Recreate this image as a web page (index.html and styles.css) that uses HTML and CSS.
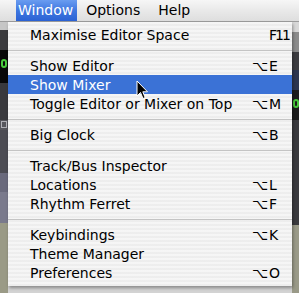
FILE: index.html
```html
<!DOCTYPE html>
<html>
<head>
<meta charset="utf-8">
<link rel="stylesheet" href="styles.css">
</head>
<body>
<div class="screen">
  <div class="menubar">
    <span class="mb-item active">Window</span>
    <span class="mb-item">Options</span>
    <span class="mb-item">Help</span>
  </div>
  <div class="desk">
    <div class="strip left">
      <div class="s s1"></div>
      <div class="s s2"></div>
      <div class="s s3"><i class="digit"></i></div>
      <div class="s s4"></div>
      <div class="s s5"><i class="tick"></i></div>
      <div class="s s6"></div>
      <div class="s s7"></div>
      <div class="s s8"></div>
      <div class="s s9"></div>
    </div>
    <div class="center"></div>
    <div class="strip right">
      <div class="s r1"></div>
      <div class="s r2"></div>
      <div class="s r3"></div>
      <div class="s r4"></div>
      <div class="s r5"><i class="digit"></i></div>
      <div class="s r6"></div>
      <div class="s r7"></div>
    </div>
  </div>

  <div class="menu">
    <div class="item"><span class="label">Maximise Editor Space</span><span class="mod"></span><span class="key fkey">F11</span></div>
    <div class="sep"></div>
    <div class="item"><span class="label">Show Editor</span><span class="mod">⌥</span><span class="key">E</span></div>
    <div class="item hl"><span class="label">Show Mixer</span><span class="mod"></span><span class="key"></span></div>
    <div class="item"><span class="label">Toggle Editor or Mixer on Top</span><span class="mod">⌥</span><span class="key">M</span></div>
    <div class="sep"></div>
    <div class="item"><span class="label">Big Clock</span><span class="mod">⌥</span><span class="key">B</span></div>
    <div class="sep"></div>
    <div class="item"><span class="label">Track/Bus Inspector</span><span class="mod"></span><span class="key"></span></div>
    <div class="item"><span class="label">Locations</span><span class="mod">⌥</span><span class="key">L</span></div>
    <div class="item"><span class="label">Rhythm Ferret</span><span class="mod">⌥</span><span class="key">F</span></div>
    <div class="sep"></div>
    <div class="item"><span class="label">Keybindings</span><span class="mod">⌥</span><span class="key">K</span></div>
    <div class="item"><span class="label">Theme Manager</span><span class="mod"></span><span class="key"></span></div>
    <div class="item"><span class="label">Preferences</span><span class="mod">⌥</span><span class="key">O</span></div>
  </div>

  <svg class="cursor" width="13" height="20" viewBox="0 0 13 20">
    <path d="M1 1 L1 16 L4.5 12.5 L7 18.5 L9.2 17.6 L6.8 11.8 L11.5 11.8 Z" fill="#000" stroke="#fff" stroke-width="1" stroke-linejoin="round"/>
  </svg>
</div>
</body>
</html>
```

FILE: styles.css
```css
html, body {
  margin: 0;
  padding: 0;
}
body {
  width: 299px;
  height: 293px;
  overflow: hidden;
  background: #c9c9c9;
  font-family: "DejaVu Sans", "Lucida Grande", sans-serif;
}
.screen {
  position: relative;
  width: 299px;
  height: 293px;
  overflow: hidden;
}
.menubar {
  height: 21px;
  border-bottom: 1px solid #9c9c9c;
  background: linear-gradient(to bottom, #f6f6f6 0%, #e9e9e9 50%, #dedede 100%);
  display: flex;
  align-items: stretch;
  padding-left: 16px;
  font-size: 14px;
  color: #000;
}
.mb-item {
  display: flex;
  align-items: center;
  padding: 0 9px;
  line-height: 21px;
}
.mb-item.active {
  padding: 0 4px 0 2px;
  color: #fff;
  background: linear-gradient(to bottom, #6a9cf0 0%, #3f77e0 50%, #2b62d4 100%);
}
.desk {
  height: 271px;
  display: flex;
}
.strip {
  display: flex;
  flex-direction: column;
  overflow: hidden;
}
.strip.left { width: 8px; }
.strip.right { width: 7px; margin-left: auto; }
.center { flex: 1; background: #d3d3d3; }
.s { flex: none; position: relative; }
.s1 { height: 8px; background: #c6c6c6; }
.s2 { height: 20px; background: #3b3b3e; }
.s3 { height: 33px; background: #080808; }
.s4 { height: 37px; background: #39393d; }
.s5 { height: 10px; background: #56565c; }
.s6 { height: 43px; background: #4c4c53; }
.s7 { height: 19px; background: #6a6a7c; }
.s8 { height: 31px; background: #7a7a8c; }
.s9 { flex: 1; background: #9a9a86; }
.digit {
  display: block;
  width: 6px;
  height: 9px;
  margin: 9px 0 0 1px;
  border: 2px solid #49c93c;
  border-radius: 3px;
  box-sizing: border-box;
}
.tick {
  display: block;
  width: 6px;
  height: 7px;
  margin: 1px 0 0 1px;
  border: 1px solid #b0b0b6;
  box-sizing: border-box;
}
.r1 { height: 10px; background: #d8d8d8; }
.r2 { height: 20px; background: #8c8c8c; }
.r3 { height: 18px; background: #3c3c40; }
.r4 { height: 20px; background: #2c3550; }
.r5 { height: 30px; background: #1c1c1c; }
.r6 { height: 105px; background: #3a3a3e; }
.r7 { flex: 1; background: #9a9a88; }

.menu {
  position: absolute;
  left: 8px;
  top: 22px;
  width: 284px;
  padding: 3px 0 4px;
  background: repeating-linear-gradient(to bottom, rgba(246,246,246,0.98) 0 2px, rgba(238,238,238,0.98) 2px 4px);
  box-shadow: 1px 2px 3px rgba(0,0,0,0.35);
  font-size: 14px;
  color: #000;
}
.item {
  height: 19px;
  display: flex;
  align-items: center;
  padding-left: 22px;
}
.item.hl {
  background: #3b72d6;
  color: #fff;
}
.label { flex: 1; white-space: nowrap; }
.mod { width: 16px; text-align: right; }
.key { width: 20px; padding-left: 1px; margin-right: 3px; white-space: nowrap; }
.fkey { letter-spacing: -2px; }
.sep {
  height: 12px;
  display: flex;
  align-items: center;
}
.sep::before {
  content: "";
  flex: 1;
  height: 1px;
  background: #c4c4c4;
}
.cursor {
  position: absolute;
  left: 136px;
  top: 80px;
}
```
